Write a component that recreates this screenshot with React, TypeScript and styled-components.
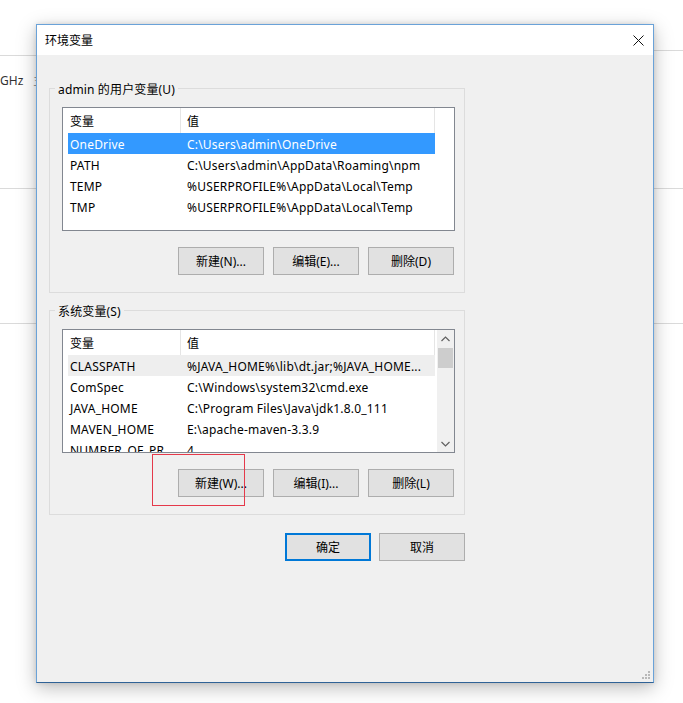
import React from "react";
import styled, { createGlobalStyle } from "styled-components";

const Global = createGlobalStyle`
  html, body { margin: 0; padding: 0; background: #ffffff; }
  body {
    font-family: "Noto Sans", "Noto Sans CJK SC", sans-serif;
    font-size: 12px;
    color: #000;
  }
  #root { width: 683px; height: 703px; }
`;

const Desktop = styled.div`
  position: relative;
  width: 683px;
  height: 703px;
  overflow: hidden;
  display: flex;
  justify-content: space-between;
  background: #ffffff;
`;

const Pane = styled.div<{ $w: number }>`
  width: ${(p) => p.$w}px;
  display: flex;
  flex-direction: column;
  overflow: hidden;
`;

const Band = styled.div<{ $h: number }>`
  height: ${(p) => p.$h}px;
  border-bottom: 1px solid #dadada;
  flex-shrink: 0;
  white-space: nowrap;
`;

const BgText = styled.div`
  margin-top: 17px;
  line-height: 16px;
  color: #333;
  display: flex;
  gap: 10px;
`;

const Window = styled.div`
  position: absolute;
  left: 36px;
  top: 24px;
  width: 618px;
  height: 659px;
  box-sizing: border-box;
  border: 1px solid #6aa2d8;
  border-bottom-color: #2f6296;
  box-shadow: 0 5px 18px rgba(0, 0, 0, 0.26), 0 0 5px rgba(0, 0, 0, 0.12);
  display: flex;
  flex-direction: column;
  background: #f0f0f0;
`;

const TitleBar = styled.div`
  height: 30px;
  flex-shrink: 0;
  background: #ffffff;
  display: flex;
  align-items: center;
  justify-content: space-between;
  padding: 0 9px 0 8px;
`;

const Title = styled.span`
  font-size: 12px;
  line-height: 16px;
  margin-top: 1px;
`;

const Body = styled.div`
  flex: 1;
  padding: 33px 0 0 12px;
  display: flex;
  flex-direction: column;
  align-items: flex-start;
`;

const Group = styled.div<{ $gapTop?: number }>`
  position: relative;
  width: 416px;
  box-sizing: border-box;
  border: 1px solid #dcdcdc;
  padding: 18px 9px 17px 12px;
  margin-top: ${(p) => p.$gapTop ?? 0}px;
`;

const Legend = styled.span`
  position: absolute;
  top: -8px;
  left: 5px;
  padding: 1px 3px 0 3px;
  background: #f0f0f0;
  line-height: 16px;
  letter-spacing: 0.15px;
  white-space: nowrap;
`;

const List = styled.div`
  width: 393px;
  height: 124px;
  box-sizing: border-box;
  border: 1px solid #828790;
  background: #ffffff;
  display: flex;
  overflow: hidden;
`;

const ListBody = styled.div`
  flex: 1;
  padding-left: 5px;
  overflow: hidden;
`;

const HeaderRow = styled.div`
  height: 25px;
  display: grid;
  grid-template-columns: 113px 254px;
  width: 367px;
`;

const HeaderCell = styled.div<{ $first?: boolean }>`
  display: flex;
  align-items: center;
  padding-left: ${(p) => (p.$first ? 2 : 6)}px;
  padding-top: 3px;
  border-right: 1px solid #e5e5e5;
  line-height: 16px;
`;

const Row = styled.div<{ $state?: "selected" | "focus" }>`
  height: 21px;
  width: 367px;
  display: grid;
  grid-template-columns: 113px 254px;
  align-items: center;
  background: ${(p) =>
    p.$state === "selected" ? "#3399ff" : p.$state === "focus" ? "#eeeeee" : "transparent"};
  color: ${(p) => (p.$state === "selected" ? "#ffffff" : "#000000")};
`;

const Cell = styled.div<{ $first?: boolean }>`
  padding-left: ${(p) => (p.$first ? 2 : 6)}px;
  padding-top: 2px;
  white-space: nowrap;
  overflow: hidden;
  text-overflow: ellipsis;
  line-height: 16px;
  letter-spacing: 0.2px;
`;

const ScrollBar = styled.div`
  width: 17px;
  flex-shrink: 0;
  background: #f0f0f0;
  display: flex;
  flex-direction: column;
`;

const ScrollArrow = styled.div`
  height: 17px;
  display: flex;
  align-items: center;
  justify-content: center;
  flex-shrink: 0;
`;

const Track = styled.div`
  flex: 1;
  padding: 1px 1px 0 1px;
`;

const Thumb = styled.div`
  height: 20px;
  background: #cdcdcd;
`;

const ButtonRow = styled.div<{ $top: number; $w: number; $gap: number }>`
  display: flex;
  justify-content: flex-end;
  gap: ${(p) => p.$gap}px;
  margin-top: ${(p) => p.$top}px;
  width: ${(p) => p.$w}px;
`;

const Button = styled.button<{ $primary?: boolean }>`
  width: 86px;
  height: 28px;
  box-sizing: border-box;
  padding: 1px 0 0 0;
  margin: 0;
  font-family: inherit;
  font-size: 12px;
  color: #000;
  background: #e1e1e1;
  border: 1px solid ${(p) => (p.$primary ? "#0078d7" : "#adadad")};
  box-shadow: ${(p) => (p.$primary ? "inset 0 0 0 1px #0078d7" : "none")};
  border-radius: 0;
  line-height: 16px;
`;

const Grip = styled.svg`
  position: absolute;
  right: 3px;
  bottom: 3px;
`;

const Annotation = styled.div`
  position: absolute;
  left: 152px;
  top: 454px;
  width: 93px;
  height: 52px;
  box-sizing: border-box;
  border: 1px solid #e5394a;
  pointer-events: none;
`;

type Item = { name: string; value: string; state?: "selected" | "focus" };

const userVars: Item[] = [
  { name: "OneDrive", value: "C:\\Users\\admin\\OneDrive", state: "selected" },
  { name: "PATH", value: "C:\\Users\\admin\\AppData\\Roaming\\npm" },
  { name: "TEMP", value: "%USERPROFILE%\\AppData\\Local\\Temp" },
  { name: "TMP", value: "%USERPROFILE%\\AppData\\Local\\Temp" },
];

const sysVars: Item[] = [
  { name: "CLASSPATH", value: "%JAVA_HOME%\\lib\\dt.jar;%JAVA_HOME...", state: "focus" },
  { name: "ComSpec", value: "C:\\Windows\\system32\\cmd.exe" },
  { name: "JAVA_HOME", value: "C:\\Program Files\\Java\\jdk1.8.0_111" },
  { name: "MAVEN_HOME", value: "E:\\apache-maven-3.3.9" },
  { name: "NUMBER_OF_PROCESSORS", value: "4" },
];

const Chevron = ({ up }: { up?: boolean }) => (
  <svg width="9" height="6" viewBox="0 0 9 6">
    <path
      d={up ? "M0.5 5 L4.5 1 L8.5 5" : "M0.5 1 L4.5 5 L8.5 1"}
      fill="none"
      stroke="#606060"
      strokeWidth="1.2"
    />
  </svg>
);

const VarList = ({ items, scroll }: { items: Item[]; scroll?: boolean }) => (
  <List>
    <ListBody>
      <HeaderRow>
        <HeaderCell $first>变量</HeaderCell>
        <HeaderCell>值</HeaderCell>
      </HeaderRow>
      {items.map((it) => (
        <Row key={it.name} $state={it.state}>
          <Cell $first>{it.name}</Cell>
          <Cell>{it.value}</Cell>
        </Row>
      ))}
    </ListBody>
    {scroll && (
      <ScrollBar>
        <ScrollArrow>
          <Chevron up />
        </ScrollArrow>
        <Track>
          <Thumb />
        </Track>
        <ScrollArrow>
          <Chevron />
        </ScrollArrow>
      </ScrollBar>
    )}
  </List>
);

export default function App() {
  return (
    <Desktop>
      <Global />
      <Pane $w={36}>
        <Band $h={55} />
        <Band $h={132}>
          <BgText>
            <span>GHz</span>
            <span style={{ color: "#999" }}>主</span>
          </BgText>
        </Band>
        <Band $h={134} />
      </Pane>
      <Pane $w={30}>
        <Band $h={50} />
        <Band $h={137} />
        <Band $h={134} />
      </Pane>

      <Window>
        <TitleBar>
          <Title>环境变量</Title>
          <svg width="11" height="11" viewBox="0 0 11 11">
            <path d="M0.5 0.5 L10.5 10.5 M10.5 0.5 L0.5 10.5" stroke="#111" strokeWidth="1" />
          </svg>
        </TitleBar>
        <Body>
          <Group>
            <Legend>admin 的用户变量(U)</Legend>
            <VarList items={userVars} />
            <ButtonRow $top={16} $w={392} $gap={9}>
              <Button>新建(N)...</Button>
              <Button>编辑(E)...</Button>
              <Button>删除(D)</Button>
            </ButtonRow>
          </Group>
          <Group $gapTop={17}>
            <Legend>系统变量(S)</Legend>
            <VarList items={sysVars} scroll />
            <ButtonRow $top={16} $w={392} $gap={9}>
              <Button>新建(W)...</Button>
              <Button>编辑(I)...</Button>
              <Button>删除(L)</Button>
            </ButtonRow>
          </Group>
          <ButtonRow $top={18} $w={416} $gap={8}>
            <Button $primary>确定</Button>
            <Button>取消</Button>
          </ButtonRow>
        </Body>
        <Grip width="10" height="10" viewBox="0 0 10 10">
          {[
            [8, 2],
            [8, 5],
            [5, 5],
            [8, 8],
            [5, 8],
            [2, 8],
          ].map(([x, y]) => (
            <rect key={`${x}-${y}`} x={x} y={y} width="2" height="2" fill="#b8b8b8" />
          ))}
        </Grip>
      </Window>
      <Annotation />
    </Desktop>
  );
}
